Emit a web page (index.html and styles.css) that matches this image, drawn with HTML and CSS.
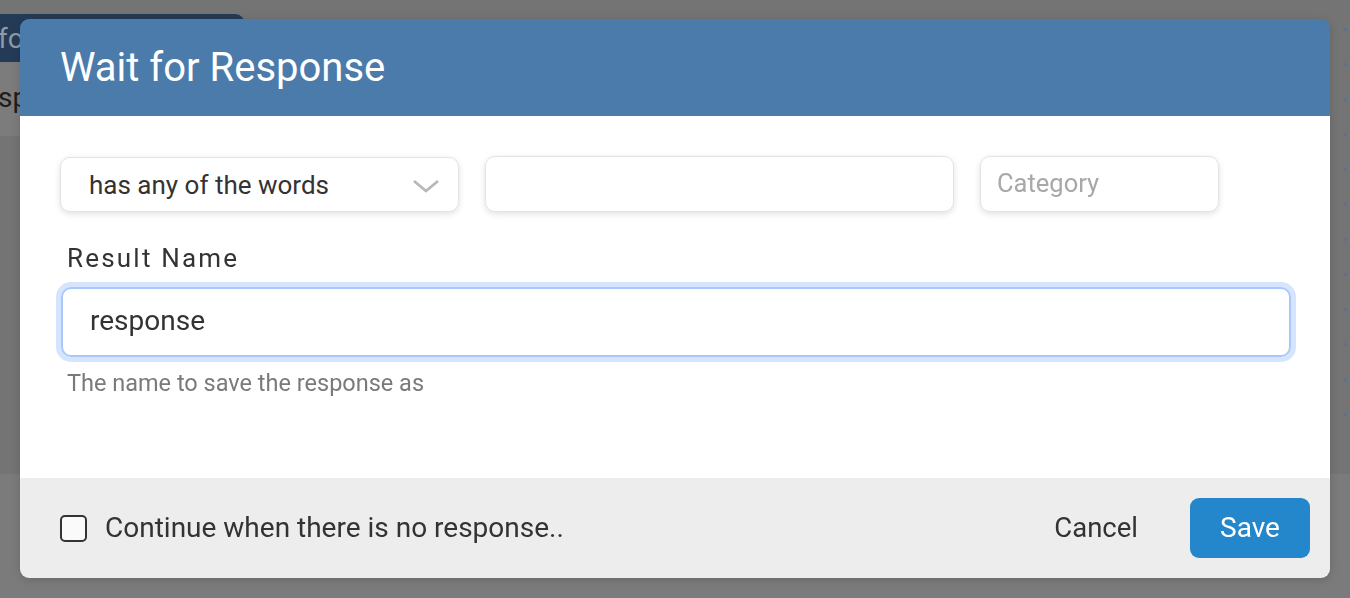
FILE: index.html
```html
<!DOCTYPE html>
<html>
<head>
<meta charset="utf-8">
<link rel="stylesheet" href="styles.css">
</head>
<body>
<div class="scene">
  <div class="canvas">
    <div class="node">
      <div class="node-head">fo</div>
      <div class="node-body">sp</div>
    </div>
    <div class="dots"></div>
  </div>
  <div class="bottom"></div>
</div>
<div class="overlay">
  <div class="modal">
    <div class="modal-head">Wait for Response</div>
    <div class="modal-body">
      <div class="row">
        <div class="field select">
          <span>has any of the words</span>
          <svg class="chev" width="28" height="16" viewBox="0 0 28 16"><path d="M2 3 L14 13 L26 3" fill="none" stroke="#b8b8b8" stroke-width="2.8"/></svg>
        </div>
        <div class="field words"></div>
        <div class="field category"><span class="ph">Category</span></div>
      </div>
      <div class="label">Result Name</div>
      <div class="result"><span>response</span></div>
      <div class="help">The name to save the response as</div>
    </div>
    <div class="modal-foot">
      <div class="check">
        <span class="box"></span>
        <span>Continue when there is no response..</span>
      </div>
      <div class="actions">
        <span class="cancel">Cancel</span>
        <span class="save">Save</span>
      </div>
    </div>
  </div>
</div>
</body>
</html>
```
FILE: styles.css
```css
html, body {
  margin: 0;
  padding: 0;
}
body {
  width: 1350px;
  height: 598px;
  overflow: hidden;
  background: #7b7b7b;
  font-family: Roboto, "Liberation Sans", sans-serif;
  position: relative;
}
.scene {
  display: flex;
  flex-direction: column;
  height: 598px;
}
.canvas {
  height: 474px;
  background: #747474;
  position: relative;
}
.bottom {
  flex: 1;
  background: #7b7b7b;
}
.node {
  position: absolute;
  left: -40px;
  top: 14px;
  width: 285px;
}
.node-head {
  height: 48px;
  background: #243b57;
  border-radius: 0 10px 0 0;
  color: #8e9aa8;
  font-size: 28px;
  line-height: 50px;
  padding-left: 38px;
}
.node-body {
  height: 74px;
  background: #7c7c7c;
  color: #1d1d1d;
  font-size: 28px;
  line-height: 72px;
  padding-left: 38px;
}
.dots {
  position: absolute;
  right: 0;
  top: 12px;
  width: 10px;
  height: 405px;
  background-image: radial-gradient(circle, #5d7288 1.6px, transparent 2px);
  background-size: 10px 35px;
  background-position: 0 0;
}
.overlay {
  position: fixed;
  inset: 0;
  display: flex;
  align-items: flex-start;
  justify-content: center;
  padding-top: 19px;
}
.modal {
  width: 1310px;
  height: 559px;
  border-radius: 9px;
  overflow: hidden;
  display: flex;
  flex-direction: column;
  box-shadow: 0 2px 10px rgba(0,0,0,0.15);
}
.modal-head {
  height: 97px;
  background: #4b7bab;
  color: #fff;
  font-size: 40px;
  line-height: 97px;
  padding-left: 40px;
  box-sizing: border-box;
}
.modal-body {
  flex: 1;
  background: #fff;
  padding: 40px 40px 0 40px;
}
.row {
  display: flex;
  gap: 26px;
  align-items: flex-start;
}
.field {
  height: 55px;
  box-sizing: border-box;
  border: 1px solid #e3e3e3;
  border-radius: 10px;
  background: #fff;
  box-shadow: 0 2px 6px rgba(0,0,0,0.12);
  display: flex;
  align-items: center;
  font-size: 26px;
  color: #333;
}
.select {
  width: 399px;
  margin-top: 1px;
  padding: 0 18px 0 28px;
  justify-content: space-between;
}
.chev {
  margin-top: 2px;
}
.words {
  width: 469px;
  height: 56px;
}
.category {
  width: 239px;
  height: 56px;
  padding-left: 16px;
}
.ph {
  color: #a8a8a8;
  font-size: 25.5px;
  margin-top: -3px;
}
.label {
  margin: 30px 0 0 7px;
  font-size: 26px;
  letter-spacing: 2.2px;
  color: #333;
  line-height: 32px;
}
.result {
  margin-top: 13px;
  height: 70px;
  width: 1230px;
  box-sizing: border-box;
  border: 2px solid #a8c8fb;
  border-radius: 10px;
  box-shadow: 0 0 0 5px #d5e5fe;
  display: flex;
  align-items: center;
  padding: 0 0 4px 27px;
  font-size: 28px;
  color: #333;
  margin-left: 1px;
}
.help {
  margin: 12px 0 0 7px;
  font-size: 23.5px;
  color: #7a7a7a;
}
.modal-foot {
  height: 100px;
  background: #ededed;
  display: flex;
  align-items: center;
  justify-content: space-between;
  padding: 0 20px 0 40px;
}
.check {
  display: flex;
  align-items: center;
  gap: 18px;
  font-size: 28px;
  color: #333;
}
.check span:last-child {
  margin-top: -2px;
}
.box {
  width: 27px;
  height: 27px;
  box-sizing: border-box;
  border: 2.5px solid #333;
  border-radius: 5px;
  background: #fafafa;
}
.actions {
  display: flex;
  align-items: center;
  gap: 52px;
}
.cancel {
  font-size: 27.5px;
  color: #333;
  margin-top: -2px;
}
.save {
  width: 120px;
  height: 60px;
  background: #2587cb;
  border-radius: 9px;
  color: #fff;
  font-size: 28px;
  display: flex;
  align-items: center;
  justify-content: center;
  padding-bottom: 2px;
  box-sizing: border-box;
}
```
